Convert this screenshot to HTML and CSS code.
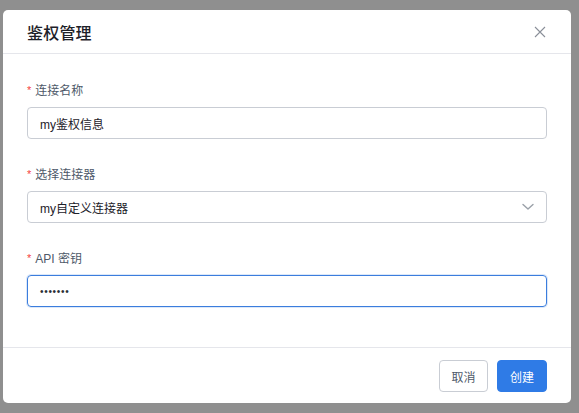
FILE: index.html
```html
<!DOCTYPE html>
<html lang="zh">
<head>
<meta charset="utf-8">
<title>鉴权管理</title>
<link rel="stylesheet" href="styles.css">
</head>
<body>
<div class="backdrop">
  <div class="modal">
    <div class="modal-header">
      <div class="modal-title">鉴权管理</div>
      <svg class="close" width="12" height="12" viewBox="0 0 12 12"><path d="M1 1L11 11M11 1L1 11" stroke="#8a8f99" stroke-width="1.1" fill="none"/></svg>
    </div>
    <div class="modal-body">
      <div class="form-item">
        <div class="label"><span class="req">*</span>连接名称</div>
        <div class="field">my鉴权信息</div>
      </div>
      <div class="form-item">
        <div class="label"><span class="req">*</span>选择连接器</div>
        <div class="field select">
          <span>my自定义连接器</span>
          <svg class="chev" width="12" height="8" viewBox="0 0 12 8"><path d="M1 1.5L6 6L11 1.5" stroke="#9aa0a8" stroke-width="1.4" fill="none" stroke-linecap="round" stroke-linejoin="round"/></svg>
        </div>
      </div>
      <div class="form-item">
        <div class="label"><span class="req">*</span>API 密钥</div>
        <div class="field focus"><span class="dots">•••••••</span></div>
      </div>
    </div>
    <div class="modal-footer">
      <button class="btn btn-default">取消</button>
      <button class="btn btn-primary">创建</button>
    </div>
  </div>
</div>
</body>
</html>
```
FILE: styles.css
```css
html, body {
  margin: 0;
  padding: 0;
}
body {
  width: 579px;
  height: 413px;
  overflow: hidden;
  background: #8f8f8f;
  font-family: "Liberation Sans", "Noto Sans CJK SC", sans-serif;
}
.backdrop {
  padding: 10px 8px 0 3px;
}
.modal {
  width: 568px;
  height: 393px;
  background: #fff;
  border-radius: 5px;
  display: flex;
  flex-direction: column;
  box-sizing: border-box;
}
.modal-header {
  height: 44px;
  box-sizing: border-box;
  border-bottom: 1px solid #e5e6eb;
  display: flex;
  align-items: center;
  justify-content: space-between;
  padding: 0 25px 0 24px;
}
.modal-title {
  font-size: 16px;
  color: #1d2129;
  font-family: "Noto Sans CJK SC", sans-serif;
  font-weight: 500;
  letter-spacing: 0.2px;
}
.close {
  display: block;
}
.modal-body {
  flex: 1;
  padding: 27px 24px 13px 24px;
}
.form-item {
  margin-bottom: 26px;
}
.form-item:last-child {
  margin-bottom: 0;
}
.label {
  height: 20px;
  line-height: 20px;
  font-size: 12px;
  color: #4e5969;
  margin-bottom: 6px;
  font-family: "Liberation Sans", "Noto Sans CJK SC", sans-serif;
}
.req {
  color: #f53f3f;
  margin-right: 4px;
  font-size: 11px;
  position: relative;
  top: -1px;
}
.field {
  height: 32px;
  box-sizing: border-box;
  border: 1px solid #c9cdd4;
  border-radius: 4px;
  padding: 0 12px;
  display: flex;
  align-items: center;
  font-size: 12px;
  color: #1d2129;
}
.select {
  justify-content: space-between;
  padding-right: 12px;
}
.chev {
  display: block;
}
.focus {
  border-color: #3b7ddd;
  box-shadow: 0 0 0 1px rgba(59, 125, 221, 0.18);
}
.dots {
  font-size: 10px;
  letter-spacing: 0.7px;
  color: #2b2f36;
}
.modal-footer {
  height: 56px;
  box-sizing: border-box;
  border-top: 1px solid #e5e6eb;
  display: flex;
  justify-content: flex-end;
  align-items: flex-start;
  padding: 12px 24px 0 24px;
  gap: 9px;
}
.btn {
  height: 32px;
  box-sizing: border-box;
  border-radius: 4px;
  font-size: 12px;
  font-family: "Noto Sans CJK SC", sans-serif;
  padding: 0;
  white-space: nowrap;
  cursor: pointer;
}
.btn-default {
  width: 49px;
  background: #fff;
  border: 1px solid #c9cdd4;
  color: #4e5969;
}
.btn-primary {
  width: 50px;
  background: #2f7be6;
  border: 1px solid #2f7be6;
  color: #fff;
}
```
